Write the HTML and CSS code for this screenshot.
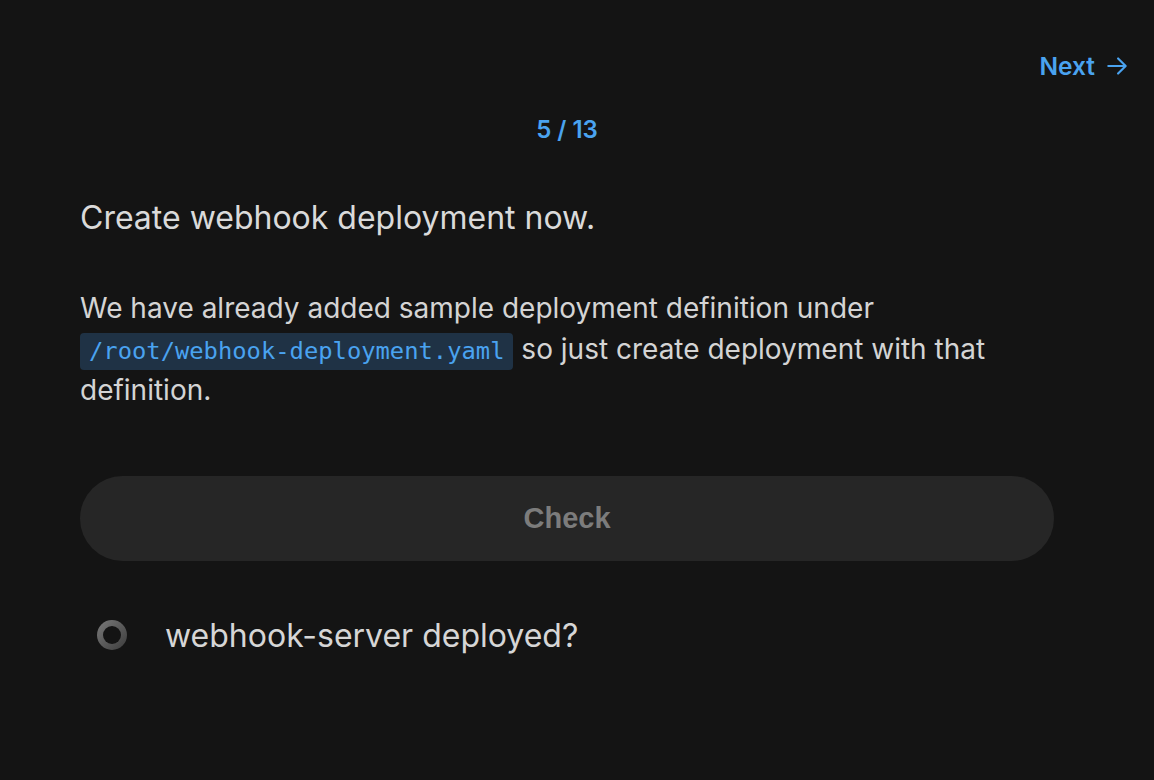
FILE: index.html
```html
<!DOCTYPE html>
<html>
<head>
<meta charset="utf-8">
<link rel="stylesheet" href="styles.css">
</head>
<body>
<div class="page">
  <div class="topbar">
    <a class="next" href="#">Next
      <svg class="arrow" width="26" height="26" viewBox="0 0 24 24" fill="none" stroke="currentColor" stroke-width="2" stroke-linecap="round" stroke-linejoin="round"><path d="M4 12h15"/><path d="M13 5l7 7-7 7"/></svg>
    </a>
  </div>
  <main class="content">
    <div class="counter">5 / 13</div>
    <h1 class="title">Create webhook deployment now.</h1>
    <p class="desc">We have already added sample deployment definition under <code class="code">/root/webhook-deployment.yaml</code> so just create deployment with that definition.</p>
    <button class="check">Check</button>
    <ul class="tasks">
      <li class="task"><span class="radio"></span><span class="task-label">webhook-server deployed?</span></li>
    </ul>
  </main>
</div>
</body>
</html>
```
FILE: styles.css
```css
html, body {
  margin: 0;
  padding: 0;
  background: #141414;
  height: 100%;
}
body {
  font-family: Inter, "Noto Sans", sans-serif;
  color: #d6d6d6;
}
.page {
  width: 1154px;
  height: 780px;
  box-sizing: border-box;
}
.topbar {
  display: flex;
  justify-content: flex-end;
  padding: 50px 24px 0 0;
  height: 32px;
}
.next {
  display: flex;
  align-items: center;
  gap: 9px;
  color: #4aa3f0;
  text-decoration: none;
  font-size: 24.5px;
  font-weight: 600;
}
.content {
  width: 974px;
  margin-left: 80px;
}
.counter {
  text-align: center;
  color: #4aa3f0;
  font-size: 24px;
  font-weight: 600;
  margin-top: 33px;
  line-height: 30px;
}
.title {
  margin: 53px 0 0;
  font-size: 32px;
  font-weight: 400;
  line-height: 40px;
  color: #dadada;
}
.desc {
  margin: 50px 0 0;
  font-size: 28px;
  line-height: 41px;
  color: #d4d4d4;
}
.code {
  display: inline-block;
  font-family: "DejaVu Sans Mono", monospace;
  font-size: 23.8px;
  line-height: 29px;
  color: #4aa3f0;
  background: #1f3245;
  border-radius: 4px;
  padding: 4px 9px;
  white-space: nowrap;
}
.check {
  display: block;
  width: 100%;
  height: 85px;
  margin-top: 65px;
  border: none;
  border-radius: 43px;
  background: #262626;
  color: #7c7c7c;
  font-family: "Liberation Sans", Arial, sans-serif;
  font-weight: 700;
  font-size: 29px;
}
.tasks {
  list-style: none;
  margin: 49px 0 0;
  padding: 0 0 0 17px;
}
.task {
  display: flex;
  align-items: center;
  gap: 38px;
  height: 50px;
}
.radio {
  position: relative;
  flex: none;
  width: 30px;
  height: 30px;
  border-radius: 50%;
  background: linear-gradient(135deg, #7a7a7a, #3c3c3c);
}
.radio::after {
  content: "";
  position: absolute;
  left: 6px;
  top: 6px;
  width: 18px;
  height: 18px;
  border-radius: 50%;
  background: #141414;
}
.task-label {
  font-size: 32px;
  color: #d6d6d6;
}
```
